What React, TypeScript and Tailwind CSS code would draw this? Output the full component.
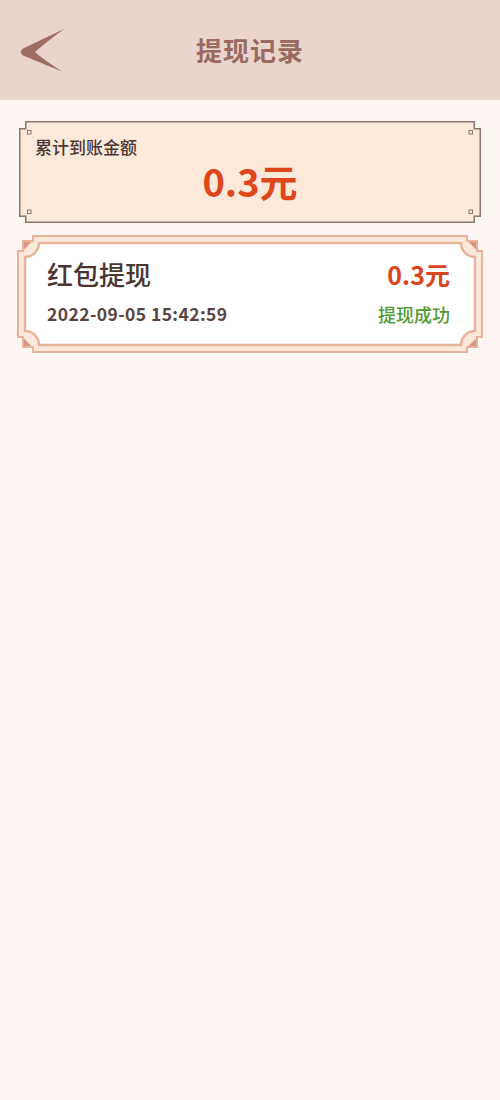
import React from "react";

const FONT = { fontFamily: '"Noto Sans CJK SC", "Noto Sans", sans-serif' };

function BackArrow() {
  return (
    <svg width="50" height="50" viewBox="15 25 50 50" className="block">
      <path
        d="M64 29 L23 48.5 Q18.5 52 23 55.5 L62 71.5 Q44 60 35 52 Q45 43 64 29 Z"
        fill="#9d6c64"
      />
    </svg>
  );
}

function SummaryFrame() {
  const W = 462;
  const H = 102;
  const c = "#8e7670";
  return (
    <svg width={W} height={H} className="absolute left-0 top-0">
      <path
        d={`M6.75 0.75 H${W - 6.75} V7.75 H${W - 0.75} V${H - 6.75} H${W - 6.75} V${H - 0.75} H6.75 V${H - 6.75} H0.75 V7.75 H6.75 Z`}
        fill="#fce9da"
        stroke={c}
        strokeWidth="1.5"
      />
      <rect x="8.5" y="9.5" width="3.5" height="3.5" fill="none" stroke={c} strokeWidth="1" />
      <rect x="8.5" y={H - 13} width="3.5" height="3.5" fill="none" stroke={c} strokeWidth="1" />
      <rect x={W - 12} y="9.5" width="3.5" height="3.5" fill="none" stroke={c} strokeWidth="1" />
      <rect x={W - 12} y={H - 13} width="3.5" height="3.5" fill="none" stroke={c} strokeWidth="1" />
    </svg>
  );
}

function RecordFrame() {
  const W = 466;
  const H = 118;
  const line = "#e8b39a";
  const outer = `M16 1 H${W - 16} V6 H${W - 6} V16 H${W - 1} V${H - 16} H${W - 6} V${H - 6} H${W - 16} V${H - 1} H16 V${H - 6} H6 V${H - 16} H1 V16 H6 V6 H16 Z`;
  const i = 8;
  const r = 14;
  const inner = `M${i + r} ${i} H${W - i - r} A${r} ${r} 0 0 0 ${W - i} ${i + r} V${H - i - r} A${r} ${r} 0 0 0 ${W - i - r} ${H - i} H${i + r} A${r} ${r} 0 0 0 ${i} ${H - i - r} V${i + r} A${r} ${r} 0 0 0 ${i + r} ${i} Z`;
  const tri = "#d8957f";
  return (
    <svg width={W} height={H} className="absolute left-0 top-0">
      <path d={outer} fill="#fde8dc" stroke={line} strokeWidth="2" />
      <path d={`M7 7 L14.5 7 L7 14.5 Z`} fill={tri} />
      <path d={`M${W - 7} 7 L${W - 14.5} 7 L${W - 7} 14.5 Z`} fill={tri} />
      <path d={`M7 ${H - 7} L14.5 ${H - 7} L7 ${H - 14.5} Z`} fill={tri} />
      <path d={`M${W - 7} ${H - 7} L${W - 14.5} ${H - 7} L${W - 7} ${H - 14.5} Z`} fill={tri} />
      <path d={inner} fill="#ffffff" stroke={line} strokeWidth="2.5" />
    </svg>
  );
}

export default function App() {
  return (
    <div className="w-[500px] h-[1100px] bg-[#fdf6f3] overflow-hidden" style={FONT}>
      <header className="h-[100px] bg-[#ead5cd] flex items-center relative">
        <div className="absolute left-[15px] top-[25px]">
          <BackArrow />
        </div>
        <h1 className="w-full text-center text-[26px] font-bold text-[#9a6a62] leading-none tracking-[1px]">
          提现记录
        </h1>
      </header>

      <div className="relative mx-[19px] mt-[21px] h-[102px]">
        <SummaryFrame />
        <div className="relative pt-[14px]">
          <div className="pl-[16px] text-[17px] leading-[24px] font-medium text-[#4a3632]">累计到账金额</div>
          <div className="text-center text-[38px] leading-[44px] font-bold text-[#e0461b]">
            0.3元
          </div>
        </div>
      </div>

      <div className="relative mx-[17px] mt-[12px] h-[118px]">
        <RecordFrame />
        <div className="relative pl-[30px] pr-[33px] pt-[23px]">
          <div className="flex items-center justify-between h-[32px]">
            <span className="text-[26px] font-medium text-[#4a3530] leading-none">红包提现</span>
            <span className="text-[25px] font-bold text-[#d9441c] leading-none">0.3元</span>
          </div>
          <div className="flex items-center justify-between h-[24px] mt-[12px]">
            <span className="text-[17.5px] font-bold text-[#5a4440] leading-none tracking-[0.4px]">2022-09-05 15:42:59</span>
            <span className="text-[18px] font-medium text-[#4e9b33] leading-none">提现成功</span>
          </div>
        </div>
      </div>
    </div>
  );
}
